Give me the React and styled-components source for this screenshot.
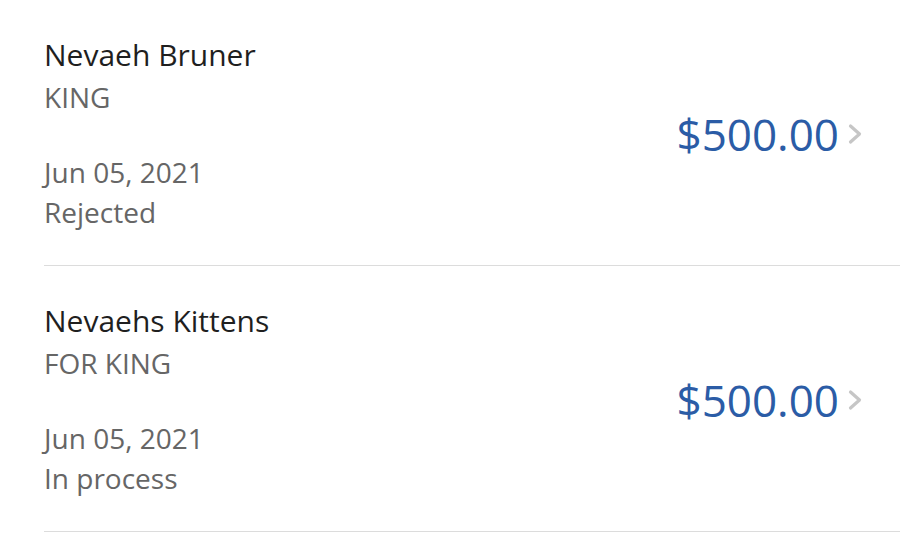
import styled, { createGlobalStyle } from "styled-components";

const GlobalStyle = createGlobalStyle`
  body {
    margin: 0;
    background: #ffffff;
    font-family: "Open Sans", "Noto Sans", sans-serif;
  }
`;

const List = styled.div`
  display: flex;
  flex-direction: column;
  padding-left: 44px;
`;

const Row = styled.div`
  display: flex;
  align-items: center;
  justify-content: space-between;
  padding: 35px 36px 33px 0;
  border-bottom: 1px solid #dcdcdc;
`;

const Info = styled.div`
  display: flex;
  flex-direction: column;
`;

const Name = styled.div`
  font-size: 30px;
  line-height: 40px;
  color: #1f1f1f;
  margin-bottom: 2px;
`;

const Line = styled.div`
  font-size: 28px;
  line-height: 40px;
  color: #666666;
  margin-top: ${(p) => (p.$gap ? "35px" : "0")};
`;

const Amount = styled.div`
  display: flex;
  align-items: center;
  gap: 8px;
  font-size: 44px;
  color: #2b5ca6;
`;

const Chevron = () => (
  <svg width="17" height="22" viewBox="0 0 17 22" fill="none">
    <path d="M3.5 3l9 8-9 8" stroke="#c6c6c6" strokeWidth="3.2" strokeLinecap="round" strokeLinejoin="round" />
  </svg>
);

const items = [
  { name: "Nevaeh Bruner", memo: "KING", date: "Jun 05, 2021", status: "Rejected", amount: "$500.00" },
  { name: "Nevaehs Kittens", memo: "FOR KING", date: "Jun 05, 2021", status: "In process", amount: "$500.00" },
];

export default function App() {
  return (
    <>
      <GlobalStyle />
      <List>
        {items.map((it, i) => (
          <Row key={i}>
            <Info>
              <Name>{it.name}</Name>
              <Line>{it.memo}</Line>
              <Line $gap>{it.date}</Line>
              <Line>{it.status}</Line>
            </Info>
            <Amount>
              {it.amount}
              <Chevron />
            </Amount>
          </Row>
        ))}
      </List>
    </>
  );
}
